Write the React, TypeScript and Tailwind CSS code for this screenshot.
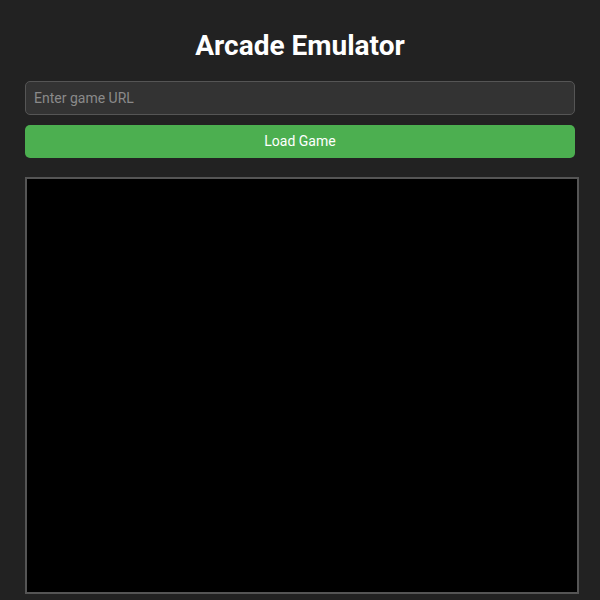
export default function App() {
  return (
    <div className="min-h-screen bg-[#222222] px-[25px] pt-[28px] pb-[20px] font-['Roboto',sans-serif] text-white">
      <h1 className="text-center text-[28px] font-bold leading-[36px]">Arcade Emulator</h1>
      <div className="mt-[17px] flex flex-col gap-[10px]">
        <input
          type="text"
          placeholder="Enter game URL"
          className="h-[34px] w-full rounded-[5px] border border-[#555555] bg-[#333333] px-[8px] text-[14px] text-white placeholder:text-[#8a8a8a] outline-none"
        />
        <button className="h-[33px] w-full rounded-[5px] bg-[#4caf50] text-[14px] text-white">
          Load Game
        </button>
      </div>
      <canvas
        width={550}
        height={413}
        className="mt-[19px] block border-2 border-[#555555] bg-black"
      />
    </div>
  );
}
